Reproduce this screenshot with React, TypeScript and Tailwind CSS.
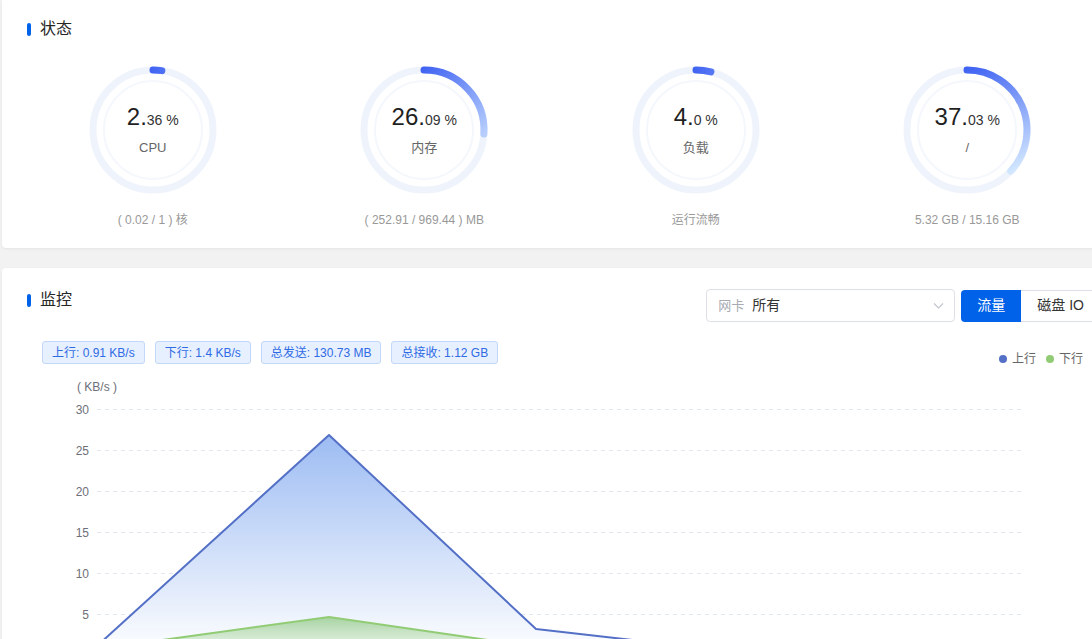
import React from "react";

const FONT = { fontFamily: '"Liberation Sans", "Noto Sans CJK SC", sans-serif' };

function lerpColor(a: string, b: string, t: number) {
  const pa = [1, 3, 5].map((i) => parseInt(a.slice(i, i + 2), 16));
  const pb = [1, 3, 5].map((i) => parseInt(b.slice(i, i + 2), 16));
  const c = pa.map((v, i) => Math.round(v + (pb[i] - v) * t));
  return `rgb(${c[0]},${c[1]},${c[2]})`;
}

function Gauge({
  id,
  pct,
  intPart,
  decPart,
  label,
  sub,
}: {
  id: string;
  pct: number;
  intPart: string;
  decPart: string;
  label: string;
  sub: string;
}) {
  const r = 60;
  const ang = (pct / 100) * 2 * Math.PI;
  const ex = 66 + r * Math.sin(ang);
  const ey = 66 - r * Math.cos(ang);
  const t = Math.min(1, pct / 32);
  const endColor = lerpColor("#4466f3", "#d2e7ff", t);
  const large = pct > 50 ? 1 : 0;
  const d = `M66 6 A60 60 0 ${large} 1 ${ex.toFixed(2)} ${ey.toFixed(2)}`;
  return (
    <div className="flex flex-col items-center">
      <div className="relative w-[132px] h-[132px]">
        <svg width="132" height="132" viewBox="0 0 132 132">
          <defs>
            <linearGradient id={id} gradientUnits="userSpaceOnUse" x1="63" y1="5" x2={ex + 1} y2={ey + 1}>
              <stop offset="0" stopColor="#3f62f2" />
              <stop offset="1" stopColor={endColor} />
            </linearGradient>
          </defs>
          <circle cx="66" cy="66" r="60" fill="none" stroke="#eff4fc" strokeWidth="7" />
          <circle cx="66" cy="66" r="49" fill="none" stroke="#f4f7fc" strokeWidth="2" />
          <path d={d} fill="none" stroke={`url(#${id})`} strokeWidth="7" strokeLinecap="round" />
        </svg>
        <div className="absolute inset-0 flex flex-col items-center pt-[39px]">
          <div className="leading-[28px] text-[#1f1f1f] whitespace-nowrap">
            <span className="text-[24px]">{intPart}.</span>
            <span className="text-[14px] text-[#333]">{decPart} %</span>
          </div>
          <div className="mt-[5px] text-[13px] leading-[18px] text-[#666]">{label}</div>
        </div>
      </div>
      <div className="mt-[15px] text-[12px] leading-[18px] text-[#999] whitespace-nowrap">{sub}</div>
    </div>
  );
}

function Title({ text }: { text: string }) {
  return (
    <div className="ml-[10px] flex items-center h-[22px]">
      <div className="w-[4px] h-[13px] rounded-full bg-[#0062e8]" />
      <div className="ml-[9px] text-[16px] leading-[22px] text-[#262626]">{text}</div>
    </div>
  );
}

function Tag({ children }: { children: React.ReactNode }) {
  return (
    <div className="h-[23px] px-[9px] flex items-center rounded-[3px] border border-[#c3d7f8] bg-[#e7f0ff] text-[12px] text-[#2f6be4] whitespace-nowrap">
      {children}
    </div>
  );
}

function Chart() {
  // svg coords = page - (42, 364)
  const gridYs = [45, 86, 127, 168, 209, 250];
  const labels = ["30", "25", "20", "15", "10", "5"];
  const blue = [
    [55, 282],
    [287, 71],
    [494, 265],
    [701, 288.6],
    [908, 287],
  ];
  const green = [
    [55, 285],
    [287, 253],
    [494, 283],
    [701, 288],
    [908, 288],
  ];
  const base = 291;
  const toLine = (pts: number[][]) => pts.map((p) => p.join(",")).join(" ");
  const toArea = (pts: number[][]) =>
    `M${pts[0][0]},${base} ` + pts.map((p) => `L${p[0]},${p[1]}`).join(" ") + ` L${pts[pts.length - 1][0]},${base} Z`;
  return (
    <svg width="1059" height="300" viewBox="0 0 1059 300" className="block">
      <defs>
        <linearGradient id="blueArea" x1="0" y1="0" x2="0" y2="1">
          <stop offset="0" stopColor="#9dbcf3" />
          <stop offset="1" stopColor="#ffffff" />
        </linearGradient>
        <linearGradient id="greenArea" x1="0" y1="0" x2="0" y2="1">
          <stop offset="0" stopColor="#9fcf97" stopOpacity="0.9" />
          <stop offset="1" stopColor="#e9f5e6" stopOpacity="0.6" />
        </linearGradient>
      </defs>
      <text x="35" y="27" fontSize="12" fill="#6e7079">( KB/s )</text>
      {gridYs.map((y, i) => (
        <g key={y}>
          <line x1="55" x2="981" y1={y + 0.5} y2={y + 0.5} stroke="#e0e6f1" strokeWidth="1" strokeDasharray="4 4" />
          <text x="47" y={y + 4.5} fontSize="12" fill="#6e7079" textAnchor="end">
            {labels[i]}
          </text>
        </g>
      ))}
      <line x1="55" x2="981" y1={base + 0.5} y2={base + 0.5} stroke="#6e7079" strokeWidth="1" />
      <path d={toArea(blue)} fill="url(#blueArea)" />
      <path d={toArea(green)} fill="url(#greenArea)" />
      <polyline points={toLine(blue)} fill="none" stroke="#5470c6" strokeWidth="2" strokeLinejoin="round" />
      <polyline points={toLine(green)} fill="none" stroke="#91cc75" strokeWidth="2" strokeLinejoin="round" />
    </svg>
  );
}

export default function App() {
  return (
    <div className="w-[1092px] h-[639px] overflow-hidden bg-[#f2f2f2]" style={FONT}>
      <div className="ml-[2px] w-[1116px] bg-white rounded-b-[4px] shadow-[0_1px_3px_rgba(0,0,0,0.06)] pl-[15px] pr-[15px] pt-[18px] pb-[19px]">
        <Title text="状态" />
        <div className="mt-[24px] grid grid-cols-4">
          <Gauge id="g1" pct={2.36} intPart="2" decPart="36" label="CPU" sub="( 0.02 / 1 ) 核" />
          <Gauge id="g2" pct={26.09} intPart="26" decPart="09" label="内存" sub="( 252.91 / 969.44 ) MB" />
          <Gauge id="g3" pct={4.0} intPart="4" decPart="0" label="负载" sub="运行流畅" />
          <Gauge id="g4" pct={37.03} intPart="37" decPart="03" label="/" sub="5.32 GB / 15.16 GB" />
        </div>
      </div>
      <div className="mt-[20px] ml-[2px] w-[1116px] h-[500px] bg-white rounded-[4px] shadow-[0_1px_3px_rgba(0,0,0,0.06)] pl-[15px] pr-[17px] pt-[21px]">
        <div className="flex items-start justify-between">
          <Title text="监控" />
          <div className="flex items-center">
            <div className="w-[249px] h-[33px] rounded-[4px] border border-[#dcdfe6] flex items-center pl-[11px] pr-[10px]">
              <span className="text-[13px] text-[#a8abb2]">网卡</span>
              <span className="ml-[8px] text-[14px] text-[#333]">所有</span>
              <svg className="ml-auto" width="11" height="11" viewBox="0 0 11 11">
                <path d="M1 3.5 L5.5 8 L10 3.5" fill="none" stroke="#c0c4cc" strokeWidth="1.1" />
              </svg>
            </div>
            <div className="ml-[6px] flex h-[32px]">
              <div className="w-[60px] flex items-center justify-center rounded-l-[4px] bg-[#0062e8] text-white text-[14px]">
                流量
              </div>
              <div className="px-[16px] flex items-center justify-center rounded-r-[4px] border border-l-0 border-[#dcdfe6] text-[#333] text-[14px] whitespace-nowrap">
                磁盘 IO
              </div>
            </div>
          </div>
        </div>
        <div className="relative ml-[25px] mt-[19px]">
          <div className="flex gap-[10px]">
            <Tag>上行: 0.91 KB/s</Tag>
            <Tag>下行: 1.4 KB/s</Tag>
            <Tag>总发送: 130.73 MB</Tag>
            <Tag>总接收: 1.12 GB</Tag>
          </div>
          <div className="absolute right-[18px] top-[10px] flex items-center text-[12px] leading-[16px] text-[#666]">
            <span className="w-[8px] h-[8px] rounded-full bg-[#5470c6]" />
            <span className="ml-[5px]">上行</span>
            <span className="ml-[10px] w-[8px] h-[8px] rounded-full bg-[#91cc75]" />
            <span className="ml-[5px]">下行</span>
          </div>
          <Chart />
        </div>
      </div>
    </div>
  );
}
